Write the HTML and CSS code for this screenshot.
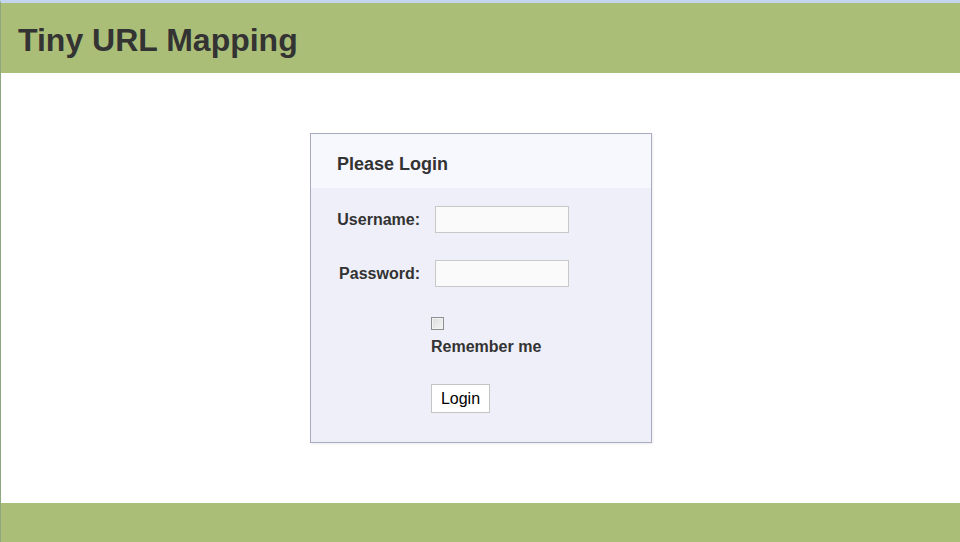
FILE: index.html
```html
<!DOCTYPE html>
<html>
<head>
<meta charset="utf-8">
<link rel="stylesheet" href="styles.css">
<title>Tiny URL Mapping</title>
</head>
<body>
<div class="page">
  <header class="top">
    <h1 class="brand">Tiny URL Mapping</h1>
  </header>
  <main class="main">
    <div class="login-box">
      <div class="login-head">Please Login</div>
      <form class="login-body">
        <label class="lbl" for="u">Username:</label>
        <input class="txt" id="u" type="text">
        <label class="lbl" for="p">Password:</label>
        <input class="txt" id="p" type="password">
        <div class="remember">
          <input class="chk" id="r" type="checkbox">
          <label class="rem-lbl" for="r">Remember me</label>
        </div>
        <div class="actions">
          <button class="btn" type="button">Login</button>
        </div>
      </form>
    </div>
  </main>
  <footer class="bottom"></footer>
</div>
</body>
</html>
```
FILE: styles.css
```css
html, body {
  margin: 0;
  padding: 0;
  height: 100%;
  background: #ffffff;
}
body {
  font-family: "Liberation Sans", Arial, sans-serif;
  overflow: hidden;
}
.page {
  border-top: 3px solid #c4d6ef;
  border-left: 1px solid #8ea77d;
  height: 100%;
  box-sizing: border-box;
  display: flex;
  flex-direction: column;
}
.top {
  background: #abbe78;
  height: 70px;
  flex: none;
  display: flex;
  align-items: center;
}
.brand {
  margin: 0 0 0 17px;
  font-size: 32px;
  font-weight: bold;
  color: #333333;
  line-height: 1;
  position: relative;
  top: 2px;
}
.main {
  padding: 60px 0 60px;
  display: flex;
  justify-content: center;
  flex: none;
}
.login-box {
  width: 342px;
  box-sizing: border-box;
  border: 1px solid #aaaac0;
  background: #efeff9;
  margin-left: 1px;
  box-shadow: 1px 1px 2px rgba(0,0,0,0.08);
}
.login-head {
  background: #f7f7fe;
  height: 54px;
  box-sizing: border-box;
  padding: 19px 0 0 26px;
  font-size: 18px;
  font-weight: bold;
  color: #333333;
  line-height: 22px;
}
.login-body {
  display: grid;
  grid-template-columns: 83px 1fr;
  column-gap: 11px;
  row-gap: 27px;
  padding: 18px 0 29px 26px;
  align-items: center;
  margin: 0;
}
.lbl {
  font-size: 16px;
  font-weight: bold;
  color: #333333;
  text-align: right;
  line-height: 27px;
}
.txt {
  width: 134px;
  height: 27px;
  box-sizing: border-box;
  border: 1px solid #c8c8c8;
  background: #fafafa;
  margin: 0 0 0 4px;
  padding: 2px 4px;
  font-size: 14px;
}
.remember {
  grid-column: 2;
  display: flex;
  flex-direction: column;
  align-items: flex-start;
  padding-top: 3px;
}
.chk {
  appearance: none;
  -webkit-appearance: none;
  width: 13px;
  height: 13px;
  margin: 0;
  box-sizing: border-box;
  border: 1px solid #8e8f8f;
  background: linear-gradient(135deg, #dcdcdc 0%, #f4f4f4 100%);
  box-shadow: inset 0 0 0 1px #f2f2f2;
}
.rem-lbl {
  margin-top: 7px;
  font-size: 16px;
  font-weight: bold;
  color: #333333;
  line-height: 19px;
}
.actions {
  grid-column: 2;
  padding-top: 1px;
}
.btn {
  width: 59px;
  height: 29px;
  background: #ffffff;
  border: 1px solid #c4c4c4;
  font-family: "Liberation Sans", Arial, sans-serif;
  font-size: 16px;
  color: #000000;
  padding: 0;
  display: block;
}
.bottom {
  background: #abbe78;
  flex: 1;
}
```
